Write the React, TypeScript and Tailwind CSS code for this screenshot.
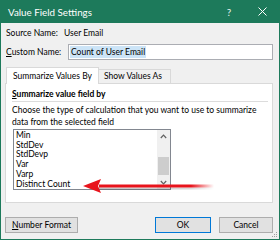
import React from "react";

export default function App() {
  const items = ["Min", "StdDev", "StdDevp", "Var", "Varp", "Distinct Count"];
  return (
    <div className="relative w-[280px] h-[240px] bg-[#f0f0f0] border-x border-b border-[#1d7a5b] flex flex-col overflow-hidden text-black font-['Lato',sans-serif] text-[8.5px]">
      {/* Title bar */}
      <div className="h-[23px] bg-[#1d7a5b] flex items-center text-white shrink-0">
        <div className="pl-[7px] text-[9.8px] leading-[14px] flex-1">Value Field Settings</div>
        <div className="w-[10px] text-[10px] leading-[12px] text-center mr-[24px] text-[#e6f2ee]">?</div>
        <svg width="9" height="9" viewBox="0 0 9 9" className="mr-[12px]">
          <path d="M0.5 0.5 L8.5 8.5 M8.5 0.5 L0.5 8.5" stroke="#ffffff" strokeWidth="1" />
        </svg>
      </div>

      <div className="flex flex-col pl-[4px] pr-[6px]">
        {/* Source name */}
        <div className="mt-[4px] h-[12px] leading-[12px] flex">
          <div className="w-[59px] pl-[1px]">Source Name:</div>
          <div>User Email</div>
        </div>

        {/* Custom name */}
        <div className="mt-[5px] flex items-center h-[16px]">
          <div className="w-[63px] pl-[1px] leading-[12px]">
            <span className="underline">C</span>ustom Name:
          </div>
          <div className="flex-1 h-[16px] bg-white border border-[#abadb3] flex items-center pl-[1px]">
            <span className="bg-[#cce4f7] leading-[12px] px-[1px]">Count of User Email</span>
          </div>
        </div>

        {/* Tabs */}
        <div className="mt-[7px] h-[16px] flex items-end relative z-10">
          <div className="ml-[1px] w-[93px] h-[17px] -mb-px bg-white border border-b-0 border-[#d9d9d9] pl-[6px] pt-[2px] leading-[12px] whitespace-nowrap">
            Summarize Values By
          </div>
          <div className="w-[72px] h-[14px] bg-[#f0f0f0] border border-l-0 border-b-0 border-[#d9d9d9] pl-[5px] leading-[13px] whitespace-nowrap">
            Show Values As
          </div>
        </div>

        {/* Panel */}
        <div className="h-[120px] bg-white border border-[#d9d9d9] flex flex-col pl-[6px] pr-[4px]">
          <div className="mt-[4px] h-[12px] leading-[12px] font-bold whitespace-nowrap">
            <span className="underline">S</span>ummarize value field by
          </div>
          <div className="mt-[1px] h-px bg-[#dcdcdc]" />
          <div className="mt-[2px] leading-[12px] whitespace-nowrap">
            Choose the type of calculation that you want to use to summarize
            <br />
            data from the selected field
          </div>
          <div className="mt-[1px] ml-[1px] w-[158px] h-[61px] border border-[#828790] bg-white flex">
            <div className="flex-1 pt-[1px] pl-[2px] leading-[9.7px]">
              {items.map((t) => (
                <div key={t}>{t}</div>
              ))}
            </div>
            <div className="w-[13px] bg-[#f0f0f0] flex flex-col items-center">
              <div className="h-[13px] flex items-center justify-center">
                <svg width="7" height="5" viewBox="0 0 7 5">
                  <path d="M0.8 4 L3.5 1.2 L6.2 4" stroke="#606060" strokeWidth="1.2" fill="none" />
                </svg>
              </div>
              <div className="mt-[14px] w-[11px] h-[18px] bg-[#cdcdcd]" />
              <div className="flex-1 flex items-center justify-center">
                <svg width="7" height="5" viewBox="0 0 7 5">
                  <path d="M0.8 1 L3.5 3.8 L6.2 1" stroke="#606060" strokeWidth="1.2" fill="none" />
                </svg>
              </div>
            </div>
          </div>
        </div>

        {/* Buttons */}
        <div className="mt-[14px] flex h-[16px]">
          <div className="w-[73px] h-[16px] bg-[#e1e1e1] border border-[#adadad] flex items-center justify-center leading-[12px]">
            <span><span className="underline">N</span>umber Format</span>
          </div>
          <div className="flex-1" />
          <div className="w-[56px] h-[16px] bg-[#e1e1e1] border border-[#0078d7] flex items-center justify-center leading-[12px]">
            OK
          </div>
          <div className="ml-[8px] w-[54px] h-[16px] bg-[#e1e1e1] border border-[#adadad] flex items-center justify-center leading-[12px]">
            Cancel
          </div>
        </div>
      </div>

      {/* Red arrow overlay */}
      <svg className="absolute left-[80px] top-[176px]" width="135" height="20" viewBox="0 0 135 20">
        <defs>
          <linearGradient id="fade" x1="0" y1="0" x2="1" y2="0">
            <stop offset="0" stopColor="#e8141c" />
            <stop offset="0.8" stopColor="#e8141c" />
            <stop offset="1" stopColor="#e8141c" stopOpacity="0" />
          </linearGradient>
          <linearGradient id="shade" x1="0" y1="0" x2="1" y2="0">
            <stop offset="0" stopColor="#000" stopOpacity="0.25" />
            <stop offset="0.8" stopColor="#000" stopOpacity="0.15" />
            <stop offset="1" stopColor="#000" stopOpacity="0" />
          </linearGradient>
        </defs>
        <rect x="18" y="11.5" width="115" height="2" fill="url(#shade)" />
        <rect x="18" y="8.5" width="115" height="3" fill="url(#fade)" />
        <path d="M2 10 L20 3 L17 10 L20 17 Z" fill="#e8141c" />
      </svg>

      {/* Resize grip */}
      <svg className="absolute right-[1px] bottom-[1px]" width="7" height="7" viewBox="0 0 7 7">
        <rect x="5" y="1" width="1" height="1" fill="#a0a0a0" />
        <rect x="3" y="3" width="1" height="1" fill="#a0a0a0" />
        <rect x="5" y="3" width="1" height="1" fill="#a0a0a0" />
        <rect x="1" y="5" width="1" height="1" fill="#a0a0a0" />
        <rect x="3" y="5" width="1" height="1" fill="#a0a0a0" />
        <rect x="5" y="5" width="1" height="1" fill="#a0a0a0" />
      </svg>
    </div>
  );
}
